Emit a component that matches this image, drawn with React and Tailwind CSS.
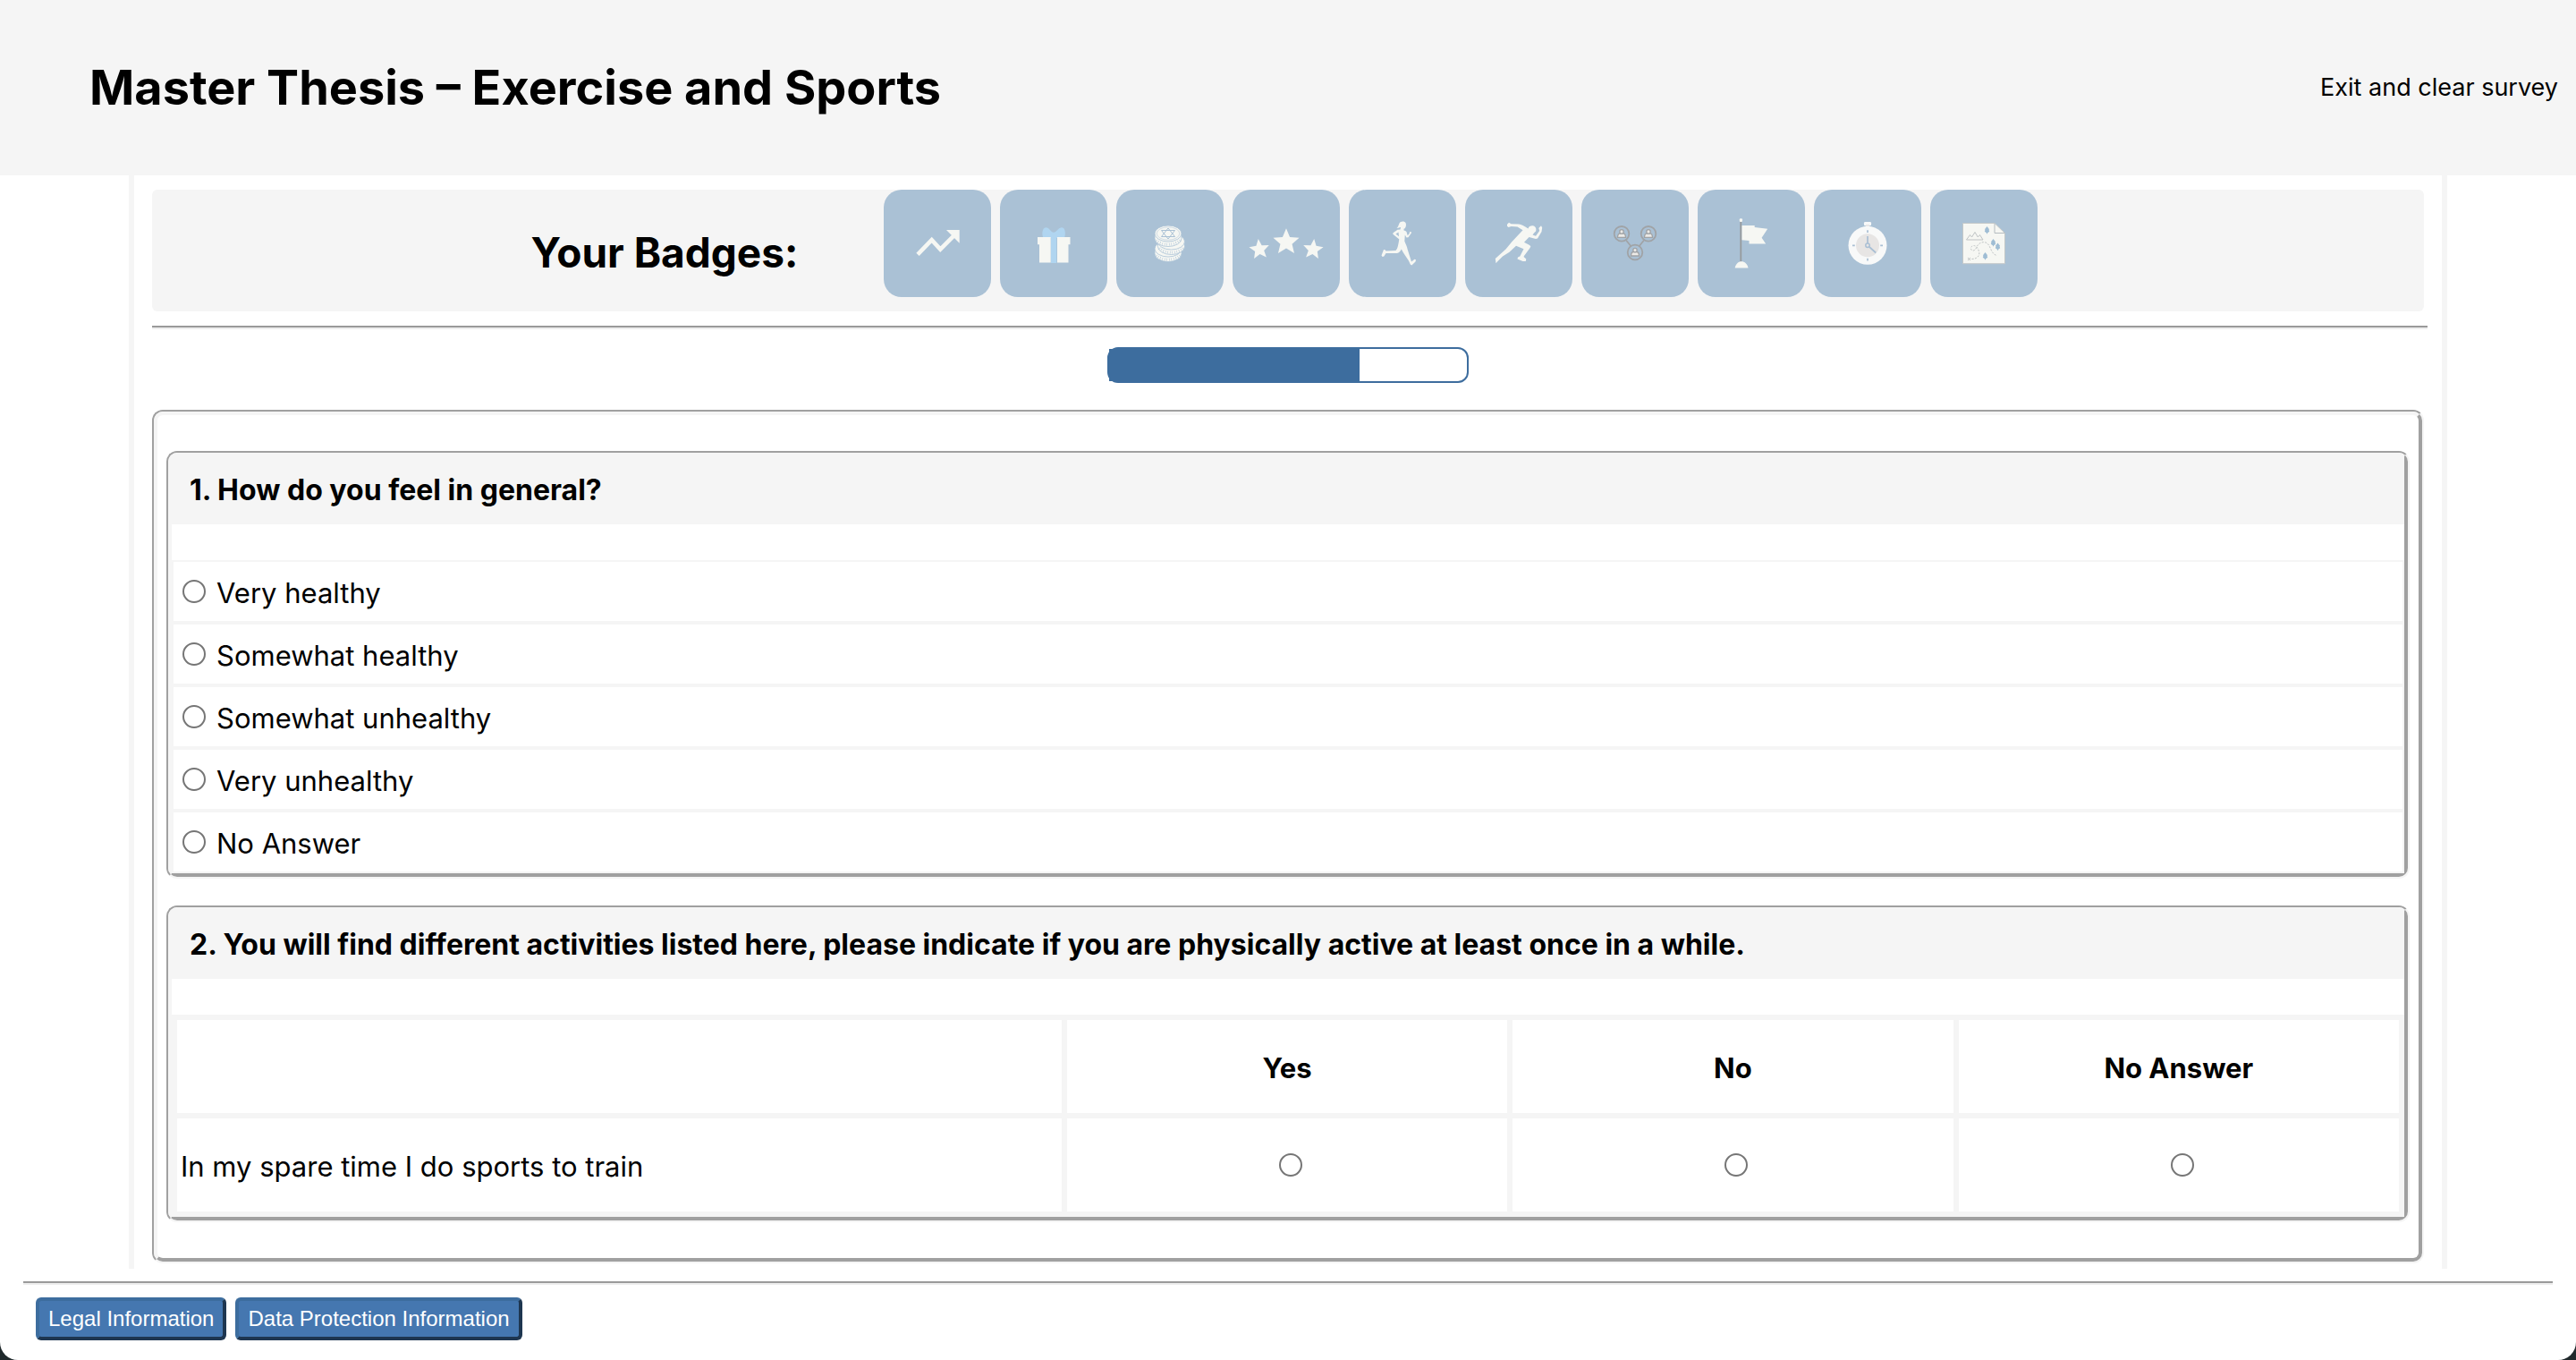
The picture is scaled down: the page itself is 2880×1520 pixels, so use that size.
import React from "react";

const CREAM = "#f6f7f3";
const SKY = "#b0d5f0";
const BLUE = "#aac1d5";
const GREY = "#a0a3a6";

const star = (cx, cy, r, rot) =>
  Array.from({ length: 10 }, (_, i) => {
    const a = ((i * 36 - 90 + rot) * Math.PI) / 180;
    const q = i % 2 ? r * 0.45 : r;
    return `${(cx + q * Math.cos(a)).toFixed(2)},${(cy + q * Math.sin(a)).toFixed(2)}`;
  }).join(" ");

function Trend() {
  return (
    <>
      <path d="M38 72.3 53.7 56.2 63.3 66.6 79.5 50.4" fill="none" stroke={CREAM} strokeWidth="4.6" />
      <path d="M70 45H84.7V59.7Z" fill={CREAM} />
    </>
  );
}

function Gift() {
  return (
    <>
      <path d="M57 82V54H48.500C46.500 50 47 42.500 51.500 42.300 55 42.300 57 47.800 60 47.800S65.500 42.300 69 42.300C73.500 42.500 73.500 50 72 54H63.300V82Z" fill={SKY} />
      <path d="M42 53H56.700V81.500H44V61.300H42ZM64 53H78.500V61.300H76.500V81.500H64Z" fill={CREAM} />
    </>
  );
}

function Coin({ x, y }) {
  return (
    <>
      <path d={`M${x - 15} ${y}v5.500a15 9 0 0 0 30 0v-5.500Z`} fill={CREAM} stroke={BLUE} strokeWidth="0.8" />
      <ellipse cx={x} cy={y} rx="15" ry="9" fill={CREAM} stroke={BLUE} strokeWidth="0.8" />
      <path d={`M${x - 13} ${y + 7.5}a15 9 0 0 0 26 0`} fill="none" stroke={BLUE} strokeWidth="3" strokeDasharray="0.5 2" />
    </>
  );
}

function Coins() {
  return (
    <>
      <Coin x={58} y={66} />
      <Coin x={61.5} y={58} />
      <Coin x={58} y={49} />
      <ellipse cx="58" cy="49" rx="12.800" ry="7.200" fill="none" stroke={BLUE} strokeWidth="0.500" />
      <path d="M58 43 65.500 52.500H50.500ZM58 55 50.500 45.500H65.500Z" fill="none" stroke={BLUE} strokeWidth="1" />
    </>
  );
}

function Stars() {
  return (
    <g fill={CREAM}>
      <polygon points={star(60, 58.5, 15.3, 0)} />
      <polygon points={star(30, 66.800, 11.800, -6)} />
      <polygon points={star(90, 66.800, 11.800, 6)} />
    </g>
  );
}

function Jogger() {
  return (
    <path d="M56.500 37.500C58 35 62.500 34.800 63.700 37.500 64.500 40 63.500 43.500 61.500 43.800L61.500 45.500C64 46 65 47 65 49L65.800 51.300 68 48.500 67.800 47.200 69.600 47 70 48.300 66.500 53.300 64.500 53.500 62.800 50.500 62.300 57.500C63 60 65.300 63.500 65.600 66.500L70 80.500 73.500 77.800 75 78.200 74.500 80.500 70.300 84.500 68.800 83.500 67 79.500 61 70.500 58.800 66.500C57.500 69 56 70.800 54 71L41.500 71 39.300 74.500 37.600 75 36.500 73.500 39 67 40.600 67.300 41.500 68.600 52.500 68C54.500 66 55 62.500 55.500 60L56.300 55.500 55.500 54.800 49.300 49.800 49.500 48.300 54.500 44.800 57.500 44.500 58 42.300C57 41.500 55.500 43.500 53.500 43 55 42.500 55.500 39.500 56.500 37.500ZM55.500 47.500 52.500 49.500 56 52.200Z" fill={CREAM} fillRule="evenodd" />
  );
}

function Sprinter() {
  return (
    <path d="M47 38.800 49 36.800 51.500 38.200 60 38.500C63 38.800 66 40.500 70.500 43.500 71 41 73.500 40 76 40.300 79 41 80 44 79 46.500L77 48.500 75.500 50.500 79 51.700 83.200 46 82.300 43 85 40.300 86.200 42.500 85.500 47 81 54.500 79 55 71.500 53 66 58.800C69 60.500 72 61.500 73.300 63.200 73 65.500 68 70.500 65.500 75L68.300 77.500 67.800 80 64.500 80 58.500 77.500 59 75.500 61.300 74.500 65.500 66.300 57 62.800 49.500 69.700 42 74.500 36.200 80.200 34.500 82.300 33.800 77 35.500 75.500 45.500 66.500 52.500 58 64.500 45.300 58.500 41.500 51.500 41 48.500 42 47 40.800Z" fill={CREAM} />
  );
}

function Person({ x, y }) {
  return (
    <>
      <circle cx={x} cy={y} r="8.300" fill="none" stroke={GREY} strokeWidth="1.800" />
      <path d={`M${x - 4.5} ${y + 4}c0-3.500 1.500-4.500 3-4.500h3c1.500 0 3 1 3 4.500Z`} fill="#eceae6" stroke={GREY} strokeWidth="1.300" />
      <circle cx={x} cy={y - 2.4} r="2.200" fill="#eceae6" stroke={GREY} strokeWidth="1.300" />
    </>
  );
}

function Network() {
  return (
    <>
      <path d="M50 56.500 55.300 63M70 56.500 64.700 63" stroke={GREY} strokeWidth="1.800" />
      <Person x={45} y={49.3} />
      <Person x={75} y={49.3} />
      <Person x={60} y={70} />
    </>
  );
}

function Flag() {
  return (
    <>
      <path d="M49.300 40H63.700V42L78.200 43.700 71.600 53.700 76.200 60.500H57.500V57L49.300 56.300Z" fill={CREAM} />
      <path d="M48.300 35V80.500" stroke="#969a9d" strokeWidth="1.800" />
      <rect x="46.800" y="32.300" width="3.200" height="3.600" rx="1" fill={CREAM} />
      <path d="M41.700 87.500C42.500 83 45.500 80.300 49 80.300S55.700 83 56.500 87.500Z" fill={CREAM} />
    </>
  );
}

function Stopwatch() {
  return (
    <>
      <rect x="56" y="36" width="8" height="4.300" rx="1.200" fill="#f8f9f9" />
      <rect x="58" y="39" width="4" height="4" fill="#e8e6e5" />
      <circle cx="60" cy="62.300" r="21.500" fill="#f8f9f9" />
      <circle cx="60" cy="62.300" r="13" fill="#e7e5e4" />
      <path d="M60 52V60M62 64 69.200 70.500M60 45.200V48M60 76.700V79.500M43 62.300H45.800M74.200 62.300H77" stroke="#a9bfd4" strokeWidth="1.700" />
      <circle cx="60" cy="62.300" r="2.200" fill="none" stroke="#a9bfd4" strokeWidth="1.500" />
    </>
  );
}

function Tree({ x, y }) {
  return <path d={`M${x} ${y - 4}l2.700 3.500-.7.300.7 2-1.700 1.200h-.400v1.200h-1.200v-1.200h-.400l-1.700-1.200.7-2-.7-.300Z`} fill="#9fbdd4" />;
}

function TreasureMap() {
  return (
    <>
      <path d="M36.500 37.500H72L83.500 48.500V82.700H36.500Z" fill={CREAM} stroke="#c3c8c8" strokeWidth="1" />
      <path d="M72 37.500V48.500H83.500" fill="none" stroke="#b5bcc0" strokeWidth="1" />
      <path d="M40.500 56 44.500 50.500 46.500 53 50 47.500 53.300 53 55.500 50.500 59 56Z" fill="none" stroke="#bfc3c4" strokeWidth="1" />
      <path d="M46.500 77.500C53 77.500 56 73 54.500 69 52 60 45.500 62 45.500 65.500S50 69 51.500 65 57 57.500 62 59C68 61 67.500 73 75 73.500" fill="none" stroke="#bfc3c4" strokeWidth="1" strokeDasharray="2 1.500" />
      <path d="M42 76 45 79M45 76 42 79" stroke="#b0b5b7" strokeWidth="0.900" />
      <Tree x={63.5} y={45} />
      <Tree x={70.5} y={59} />
      <Tree x={75.5} y={63.5} />
      <Tree x={61.5} y={74} />
    </>
  );
}

const BADGES = [
  ["Progress", Trend],
  ["Gift", Gift],
  ["Coins", Coins],
  ["Stars", Stars],
  ["Jogger", Jogger],
  ["Sprinter", Sprinter],
  ["Community", Network],
  ["Flag", Flag],
  ["Stopwatch", Stopwatch],
  ["Map", TreasureMap],
];

// Two-tone engraved frame shared by the form and its question cards.
function Frame({ children, as: Tag = "div", className = "" }) {
  return (
    <Tag className="rounded-xl border-2 border-t-[#a0a0a0] border-l-[#a0a0a0] border-r-[#f5f5f5] border-b-[#f5f5f5]">
      <div className={`rounded-[10px] border-4 border-t-[#f5f5f5] border-l-[#f5f5f5] border-r-[#a0a0a0] border-b-[#a0a0a0] ${className}`}>
        {children}
      </div>
    </Tag>
  );
}

function Rule({ className = "" }) {
  return <hr className={`h-1 border-0 border-t-2 border-t-[#9a9a9a] bg-[#ededed] ${className}`} />;
}

function Question({ title, children }) {
  return (
    <Frame as="section">
      <h2 className="bg-[#f5f5f5] px-5 py-[18px] text-[32px] leading-[40px] font-bold">{title}</h2>
      <div className="pt-10">{children}</div>
    </Frame>
  );
}

const RADIO = "block size-[26px] shrink-0 appearance-none rounded-full border-2 border-[#767676] bg-white checked:border-8 checked:border-[#3d6d9e]";
const CELL = "h-[108px] border-2 border-[#f5f5f5] bg-white";
const BUTTON = "h-12 rounded-md border-4 border-t-[#3d6d9e] border-l-[#3d6d9e] border-r-[#1e3650] border-b-[#1e3650] bg-[#4577b0] px-[10px] font-['Liberation_Sans',Arial,sans-serif] text-[24px] leading-none text-white";

const ANSWERS = ["Very healthy", "Somewhat healthy", "Somewhat unhealthy", "Very unhealthy", "No Answer"];
const CHOICES = ["Yes", "No", "No Answer"];

export default function App() {
  return (
    <div className="min-h-screen bg-[#20292c] font-[Inter,sans-serif] text-black">
      <div className="flex min-h-screen flex-col rounded-b-[20px] bg-white">
        <header className="flex items-center justify-between bg-[#f5f5f5] py-[58px] pr-5 pl-[100px]">
          <h1 className="text-[54px] leading-[80px] font-bold">Master Thesis – Exercise and Sports</h1>
          <a href="#exit" className="text-[27px] leading-[40px]">Exit and clear survey</a>
        </header>

        <main className="mx-36 grow border-x-[6px] border-[#f5f5f5] pt-4 pr-4 pb-[6px] pl-5">
          <section className="mr-1 flex justify-center gap-24 rounded-md bg-[#f5f5f5] pr-2">
            <h2 className="pt-10 text-[46px] leading-[60px] font-bold">Your Badges:</h2>
            <ul className="flex gap-[10px] pb-4">
              {BADGES.map(([name, Icon]) => (
                <li key={name}>
                  <svg viewBox="0 0 120 120" role="img" aria-label={name} className="block size-[120px] rounded-[20px] bg-[#aac1d5]">
                    <Icon />
                  </svg>
                </li>
              ))}
            </ul>
          </section>
          <Rule className="mt-4" />

          <div className="mt-5 mr-1 flex flex-col gap-[30px]">
            <div role="progressbar" aria-label="Survey progress" aria-valuenow={70} className="h-10 w-[404px] self-center rounded-xl border-2 border-[#3d6d9e]">
              <div className="h-full bg-[#3d6d9e]" style={{ width: "70%" }} />
            </div>

            <Frame as="form" className="flex flex-col gap-[30px] px-[10px] py-10">
              <Question title="1. How do you feel in general?">
                <fieldset aria-label="How do you feel in general?">
                  {ANSWERS.map((a) => (
                    <label key={a} className="flex h-[70px] items-center gap-3 border-2 border-[#f5f5f5] pl-[10px] text-[31px] leading-[40px]">
                      <input type="radio" name="health" className={RADIO} />
                      <span className="pt-1">{a}</span>
                    </label>
                  ))}
                </fieldset>
              </Question>

              <Question title="2. You will find different activities listed here, please indicate if you are physically active at least once in a while.">
                <table className="w-full table-fixed border-separate border-spacing-[2px] border-2 border-[#f5f5f5] bg-[#f5f5f5] text-[31px] leading-[40px]">
                  <thead>
                    <tr>
                      <td className={`w-2/5 ${CELL}`} />
                      {CHOICES.map((c) => (
                        <th key={c} scope="col" className={`pt-1 font-bold ${CELL}`}>{c}</th>
                      ))}
                    </tr>
                  </thead>
                  <tbody>
                    <tr>
                      <th scope="row" className={`pt-1 pl-1 text-left font-normal ${CELL}`}>
                        In my spare time I do sports to train
                      </th>
                      {CHOICES.map((c) => (
                        <td key={c} className={`pl-2 ${CELL}`}>
                          <input type="radio" name="train" aria-label={c} className={`mx-auto ${RADIO}`} />
                        </td>
                      ))}
                    </tr>
                  </tbody>
                </table>
              </Question>
            </Frame>
          </div>
        </main>

        <footer className="px-[26px] pt-[14px] pb-[22px]">
          <Rule />
          <div className="mt-[14px] flex gap-[10px] pl-[14px]">
            <button type="button" className={BUTTON}>Legal Information</button>
            <button type="button" className={BUTTON}>Data Protection Information</button>
          </div>
        </footer>
      </div>
    </div>
  );
}
